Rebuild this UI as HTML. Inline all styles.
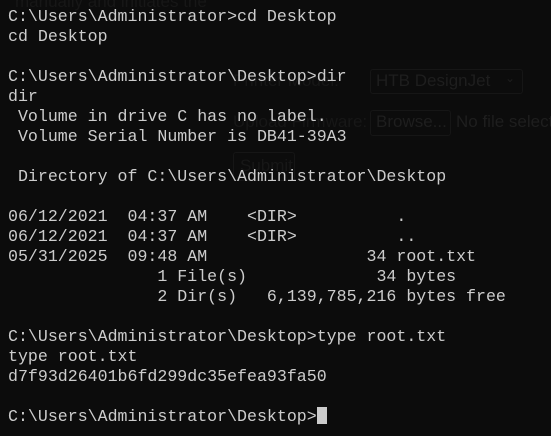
<!DOCTYPE html><html><head><style>
html,body{margin:0;width:551px;height:436px;background:#0c0c0c;overflow:hidden}
.g{position:absolute;font-family:"Liberation Sans",sans-serif;color:#171717;font-size:17px;white-space:nowrap}
.b{position:absolute;border:1px solid #161616;border-radius:3px}
pre{position:absolute;left:8px;top:7px;margin:0;font-family:"Liberation Mono",monospace;font-size:16.6px;line-height:20px;color:#cccccc}
.c{display:inline-block;width:10px;height:17px;background:#cccccc;vertical-align:-3px}
</style></head><body>
<div class="g" style="left:15px;top:-8px">manually and initiates the</div>
<div class="g" style="left:233px;top:71px">Printer Model:</div>
<div class="b" style="left:370px;top:69px;width:151px;height:23px"></div>
<div class="g" style="left:376px;top:71px;color:#1e1e1e">HTB DesignJet</div>
<div class="g" style="left:505px;top:71px;color:#1e1e1e;font-size:12px">⌄</div>
<div class="g" style="left:233px;top:112px">Upload Firmware:</div>
<div class="b" style="left:370px;top:110px;width:79px;height:24px"></div>
<div class="g" style="left:376px;top:112px;color:#1e1e1e">Browse...</div>
<div class="g" style="left:456px;top:112px;color:#1e1e1e">No file selected</div>
<div class="b" style="left:233px;top:152px;width:60px;height:27px"></div>
<div class="g" style="left:240px;top:156px">Submit</div>
<pre>C:\Users\Administrator>cd Desktop
cd Desktop

C:\Users\Administrator\Desktop>dir
dir
 Volume in drive C has no label.
 Volume Serial Number is DB41-39A3

 Directory of C:\Users\Administrator\Desktop

06/12/2021  04:37 AM    &lt;DIR>          .
06/12/2021  04:37 AM    &lt;DIR>          ..
05/31/2025  09:48 AM                34 root.txt
               1 File(s)             34 bytes
               2 Dir(s)   6,139,785,216 bytes free

C:\Users\Administrator\Desktop>type root.txt
type root.txt
d7f93d26401b6fd299dc35efea93fa50

C:\Users\Administrator\Desktop><span class="c"></span></pre>
</body></html>
